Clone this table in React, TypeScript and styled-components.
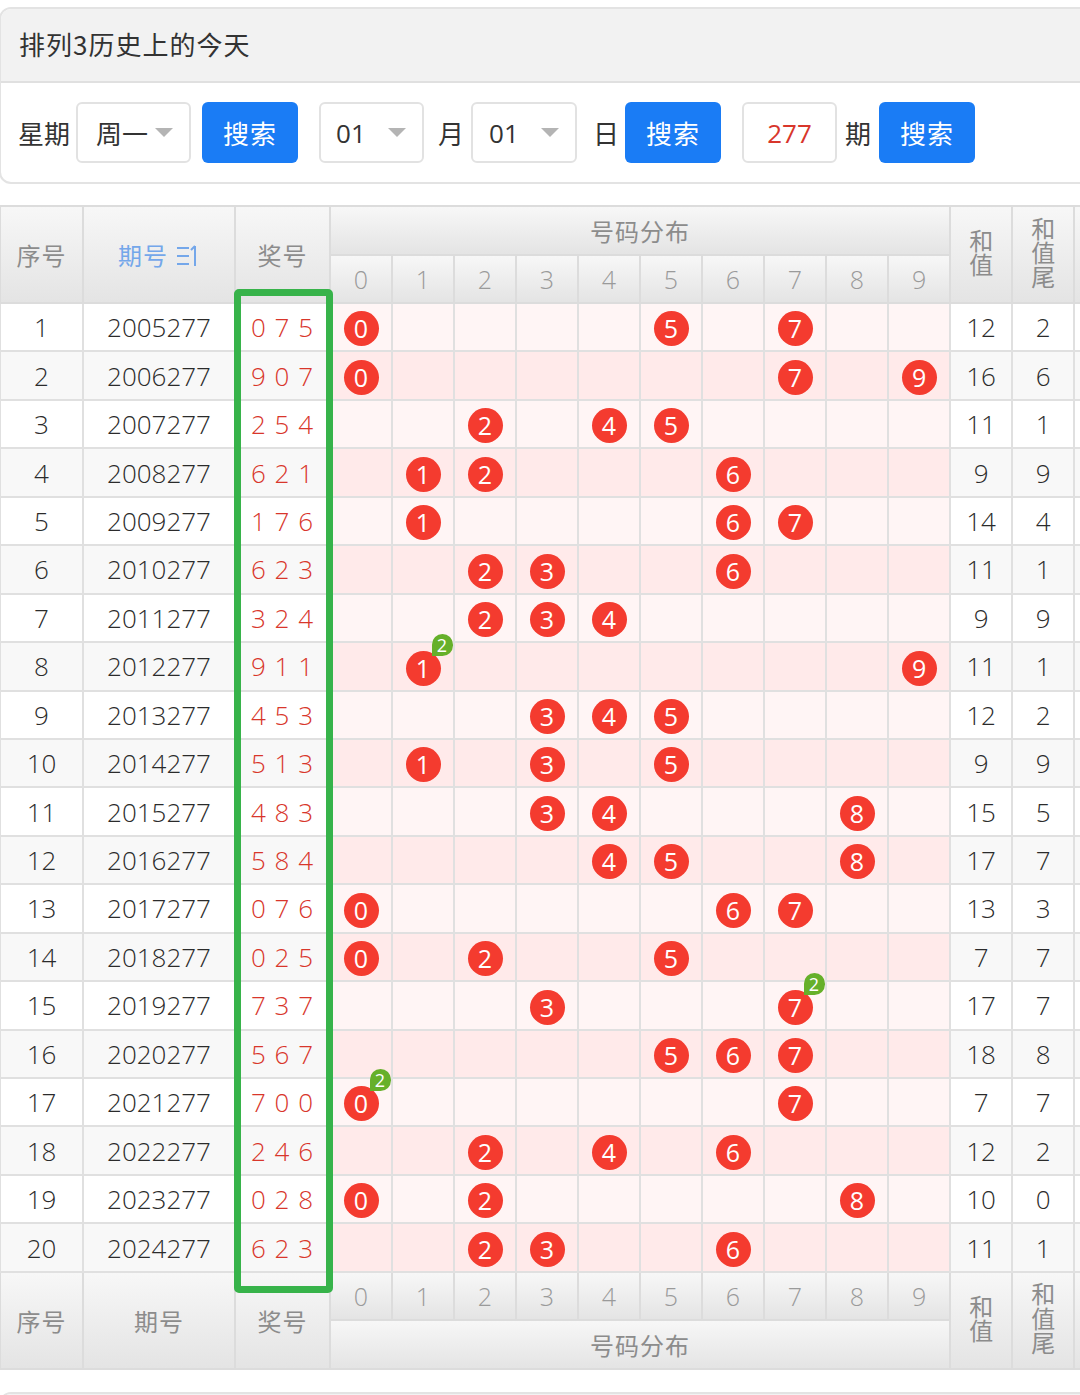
import React from 'react';
import styled, { createGlobalStyle } from 'styled-components';

const GlobalStyle = createGlobalStyle`
  html, body { margin: 0; padding: 0; background: #fff; }
  body {
    width: 1080px;
    overflow-x: hidden;
    font-family: "Open Sans", "Noto Sans CJK SC", sans-serif;
    color: #333;
  }
`;

const CJK = `"Noto Sans CJK SC", "Noto Sans", sans-serif`;
const NUM = `"Open Sans", "Noto Sans", sans-serif`;

const Card = styled.section<{ $mt: number }>`
  margin: ${(p) => p.$mt}px 0 0 -1px;
  width: 1120px;
  border: 2px solid #e3e3e3;
  border-radius: 12px;
  overflow: hidden;
  background: #fff;
`;

const TitleBar = styled.div`
  box-sizing: border-box;
  height: 74px;
  display: flex;
  align-items: center;
  padding: 0 0 4px 18px;
  background: #f2f2f2;
  border-bottom: 2px solid #e0e0e0;
  font-family: ${CJK};
  font-size: 26px;
  letter-spacing: 1px;
  color: #333;
`;

const FormRow = styled.div`
  height: 99px;
  display: flex;
  align-items: center;
  padding-left: 17px;
`;

const Label = styled.span<{ $ml?: number }>`
  margin-left: ${(p) => p.$ml ?? 0}px;
  font-family: ${CJK};
  font-size: 26px;
  color: #333;
`;

const SelectBox = styled.div<{ $w: number; $ml: number; $pl: number; $cjk?: boolean }>`
  box-sizing: border-box;
  width: ${(p) => p.$w}px;
  height: 61px;
  margin-left: ${(p) => p.$ml}px;
  padding-left: ${(p) => p.$pl}px;
  padding-right: 16px;
  display: flex;
  align-items: center;
  border: 2px solid #e2e2e2;
  border-radius: 6px;
  background: #fff;
  font-family: ${(p) => (p.$cjk ? CJK : NUM)};
  font-size: 26px;
  color: #333;
`;

const Caret = styled.span`
  margin-left: auto;
  width: 0;
  height: 0;
  border-left: 9px solid transparent;
  border-right: 9px solid transparent;
  border-top: 9px solid #b4b4b4;
`;

const Button = styled.button<{ $ml: number }>`
  width: 96px;
  height: 61px;
  margin-left: ${(p) => p.$ml}px;
  border: none;
  border-radius: 6px;
  background: #1a7cf5;
  color: #fff;
  font-family: ${CJK};
  font-size: 26px;
  letter-spacing: 1px;
  padding: 0;
`;

const NumInput = styled.div<{ $ml: number }>`
  box-sizing: border-box;
  width: 95px;
  height: 61px;
  margin-left: ${(p) => p.$ml}px;
  display: flex;
  align-items: center;
  justify-content: center;
  border: 2px solid #e2e2e2;
  border-radius: 6px;
  font-family: ${NUM};
  font-size: 26px;
  color: #d8362b;
`;

const TableWrap = styled.div`
  position: relative;
  margin: 21px 0 0 -1px;
  width: 1135px;
`;

const Table = styled.table`
  border-collapse: collapse;
  table-layout: fixed;
  width: 1135px;
`;

const Th = styled.th<{ $blue?: boolean; $h?: number; $num?: boolean }>`
  padding: 0;
  height: ${(p) => (p.$h ? `${p.$h}px` : 'auto')};
  border: 2px solid #dcdcdc;
  background: linear-gradient(to bottom, #f7f7f7, #e4e4e4);
  color: ${(p) => (p.$blue ? '#74a7ea' : p.$num ? '#9a9a9a' : '#8c8c8c')};
  font-family: ${(p) => (p.$num ? NUM : CJK)};
  font-weight: ${(p) => (p.$num ? 300 : 400)};
  font-size: ${(p) => (p.$num ? 25 : 24)}px;
  letter-spacing: ${(p) => (p.$num ? 0 : 1)}px;
  text-align: center;
  vertical-align: middle;
`;

const Stack = styled.span`
  display: inline-block;
  width: 1em;
  line-height: 1.02;
  word-break: break-all;
`;

const SortIcon = styled.svg`
  width: 24px;
  height: 24px;
  margin-left: 8px;
  vertical-align: -3px;
`;

const Tr = styled.tr`
  height: 48.45px;
`;

type Tone = 'plain' | 'pink';

const Td = styled.td<{ $tone: Tone; $even: boolean; $red?: boolean }>`
  padding: 0;
  border: 2px solid #e0e0e0;
  text-align: center;
  vertical-align: middle;
  font-family: ${NUM};
  font-weight: 300;
  font-size: 26px;
  color: ${(p) => (p.$red ? '#d8362b' : '#2b2b2b')};
  letter-spacing: ${(p) => (p.$red ? '1px' : '0')};
  background: ${(p) =>
    p.$tone === 'pink'
      ? p.$even
        ? '#ffeaea'
        : '#fff5f5'
      : p.$even
      ? '#f8f8f8'
      : '#ffffff'};
`;

const Ball = styled.span`
  position: relative;
  display: inline-flex;
  align-items: center;
  justify-content: center;
  width: 35px;
  height: 35px;
  border-radius: 50%;
  background: #f43b2f;
  color: #fff;
  font-family: ${NUM};
  font-weight: 400;
  font-size: 25px;
  line-height: 1;
  vertical-align: middle;
`;

const Badge = styled.span`
  position: absolute;
  left: 26px;
  top: -17px;
  width: 21px;
  height: 22px;
  display: flex;
  align-items: center;
  justify-content: center;
  border-radius: 11px 11px 11px 0;
  background: #66b02a;
  color: #fff;
  font-family: ${NUM};
  font-size: 18px;
  line-height: 1;
`;

const GreenFrame = styled.div`
  position: absolute;
  left: 235px;
  top: 84px;
  width: 99px;
  height: 1004px;
  box-sizing: border-box;
  border: 7px solid #37b34a;
  border-radius: 5px;
  pointer-events: none;
`;

const draws: [string, string][] = [
  ['2005277', '075'],
  ['2006277', '907'],
  ['2007277', '254'],
  ['2008277', '621'],
  ['2009277', '176'],
  ['2010277', '623'],
  ['2011277', '324'],
  ['2012277', '911'],
  ['2013277', '453'],
  ['2014277', '513'],
  ['2015277', '483'],
  ['2016277', '584'],
  ['2017277', '076'],
  ['2018277', '025'],
  ['2019277', '737'],
  ['2020277', '567'],
  ['2021277', '700'],
  ['2022277', '246'],
  ['2023277', '028'],
  ['2024277', '623'],
];

const digits = [0, 1, 2, 3, 4, 5, 6, 7, 8, 9];
const colWidths = [83, 152, 95, ...digits.map(() => 62), 62, 62, 62];

function SortGlyph() {
  return (
    <SortIcon viewBox="0 0 24 24" fill="none" stroke="#74a7ea" strokeWidth="2">
      <path d="M1 4H13M1 12H13M1 20H13" />
      <path d="M19 2V22M15 6L19 2" />
    </SortIcon>
  );
}

export default function App() {
  return (
    <>
      <GlobalStyle />
      <Card $mt={7}>
        <TitleBar>排列3历史上的今天</TitleBar>
        <FormRow>
          <Label>星期</Label>
          <SelectBox $w={115} $ml={6} $pl={18} $cjk>
            周一
            <Caret />
          </SelectBox>
          <Button $ml={11}>搜索</Button>
          <SelectBox $w={105} $ml={21} $pl={15}>
            01
            <Caret />
          </SelectBox>
          <Label $ml={14}>月</Label>
          <SelectBox $w={106} $ml={7} $pl={16}>
            01
            <Caret />
          </SelectBox>
          <Label $ml={16}>日</Label>
          <Button $ml={6}>搜索</Button>
          <NumInput $ml={21}>277</NumInput>
          <Label $ml={8}>期</Label>
          <Button $ml={8}>搜索</Button>
        </FormRow>
      </Card>

      <TableWrap>
        <Table>
          <colgroup>
            {colWidths.map((w, i) => (
              <col key={i} style={{ width: w }} />
            ))}
          </colgroup>
          <thead>
            <tr>
              <Th rowSpan={2}>序号</Th>
              <Th rowSpan={2} $blue>
                期号
                <SortGlyph />
              </Th>
              <Th rowSpan={2}>奖号</Th>
              <Th colSpan={10} $h={47}>号码分布</Th>
              <Th rowSpan={2}>
                <Stack>和值</Stack>
              </Th>
              <Th rowSpan={2}>
                <Stack>和值尾</Stack>
              </Th>
              <Th rowSpan={2} />
            </tr>
            <tr>
              {digits.map((d) => (
                <Th key={d} $num $h={46}>
                  {d}
                </Th>
              ))}
            </tr>
          </thead>
          <tbody>
            {draws.map(([issue, code], i) => {
              const nums = code.split('').map(Number);
              const sum = nums.reduce((a, b) => a + b, 0);
              const even = i % 2 === 1;
              return (
                <Tr key={issue}>
                  <Td $tone="plain" $even={even}>{i + 1}</Td>
                  <Td $tone="plain" $even={even}>{issue}</Td>
                  <Td $tone="plain" $even={even} $red>
                    {nums.join(' ')}
                  </Td>
                  {digits.map((d) => {
                    const count = nums.filter((n) => n === d).length;
                    return (
                      <Td key={d} $tone="pink" $even={even}>
                        {count > 0 && (
                          <Ball>
                            {d}
                            {count > 1 && <Badge>{count}</Badge>}
                          </Ball>
                        )}
                      </Td>
                    );
                  })}
                  <Td $tone="plain" $even={even}>{sum}</Td>
                  <Td $tone="plain" $even={even}>{sum % 10}</Td>
                  <Td $tone="plain" $even={even} />
                </Tr>
              );
            })}
          </tbody>
          <tfoot>
            <tr>
              <Th rowSpan={2}>序号</Th>
              <Th rowSpan={2}>期号</Th>
              <Th rowSpan={2}>奖号</Th>
              {digits.map((d) => (
                <Th key={d} $num $h={46}>
                  {d}
                </Th>
              ))}
              <Th rowSpan={2}>
                <Stack>和值</Stack>
              </Th>
              <Th rowSpan={2}>
                <Stack>和值尾</Stack>
              </Th>
              <Th rowSpan={2} />
            </tr>
            <tr>
              <Th colSpan={10} $h={47}>号码分布</Th>
            </tr>
          </tfoot>
        </Table>
        <GreenFrame />
      </TableWrap>

      <Card $mt={22}>
        <TitleBar />
      </Card>
    </>
  );
}
